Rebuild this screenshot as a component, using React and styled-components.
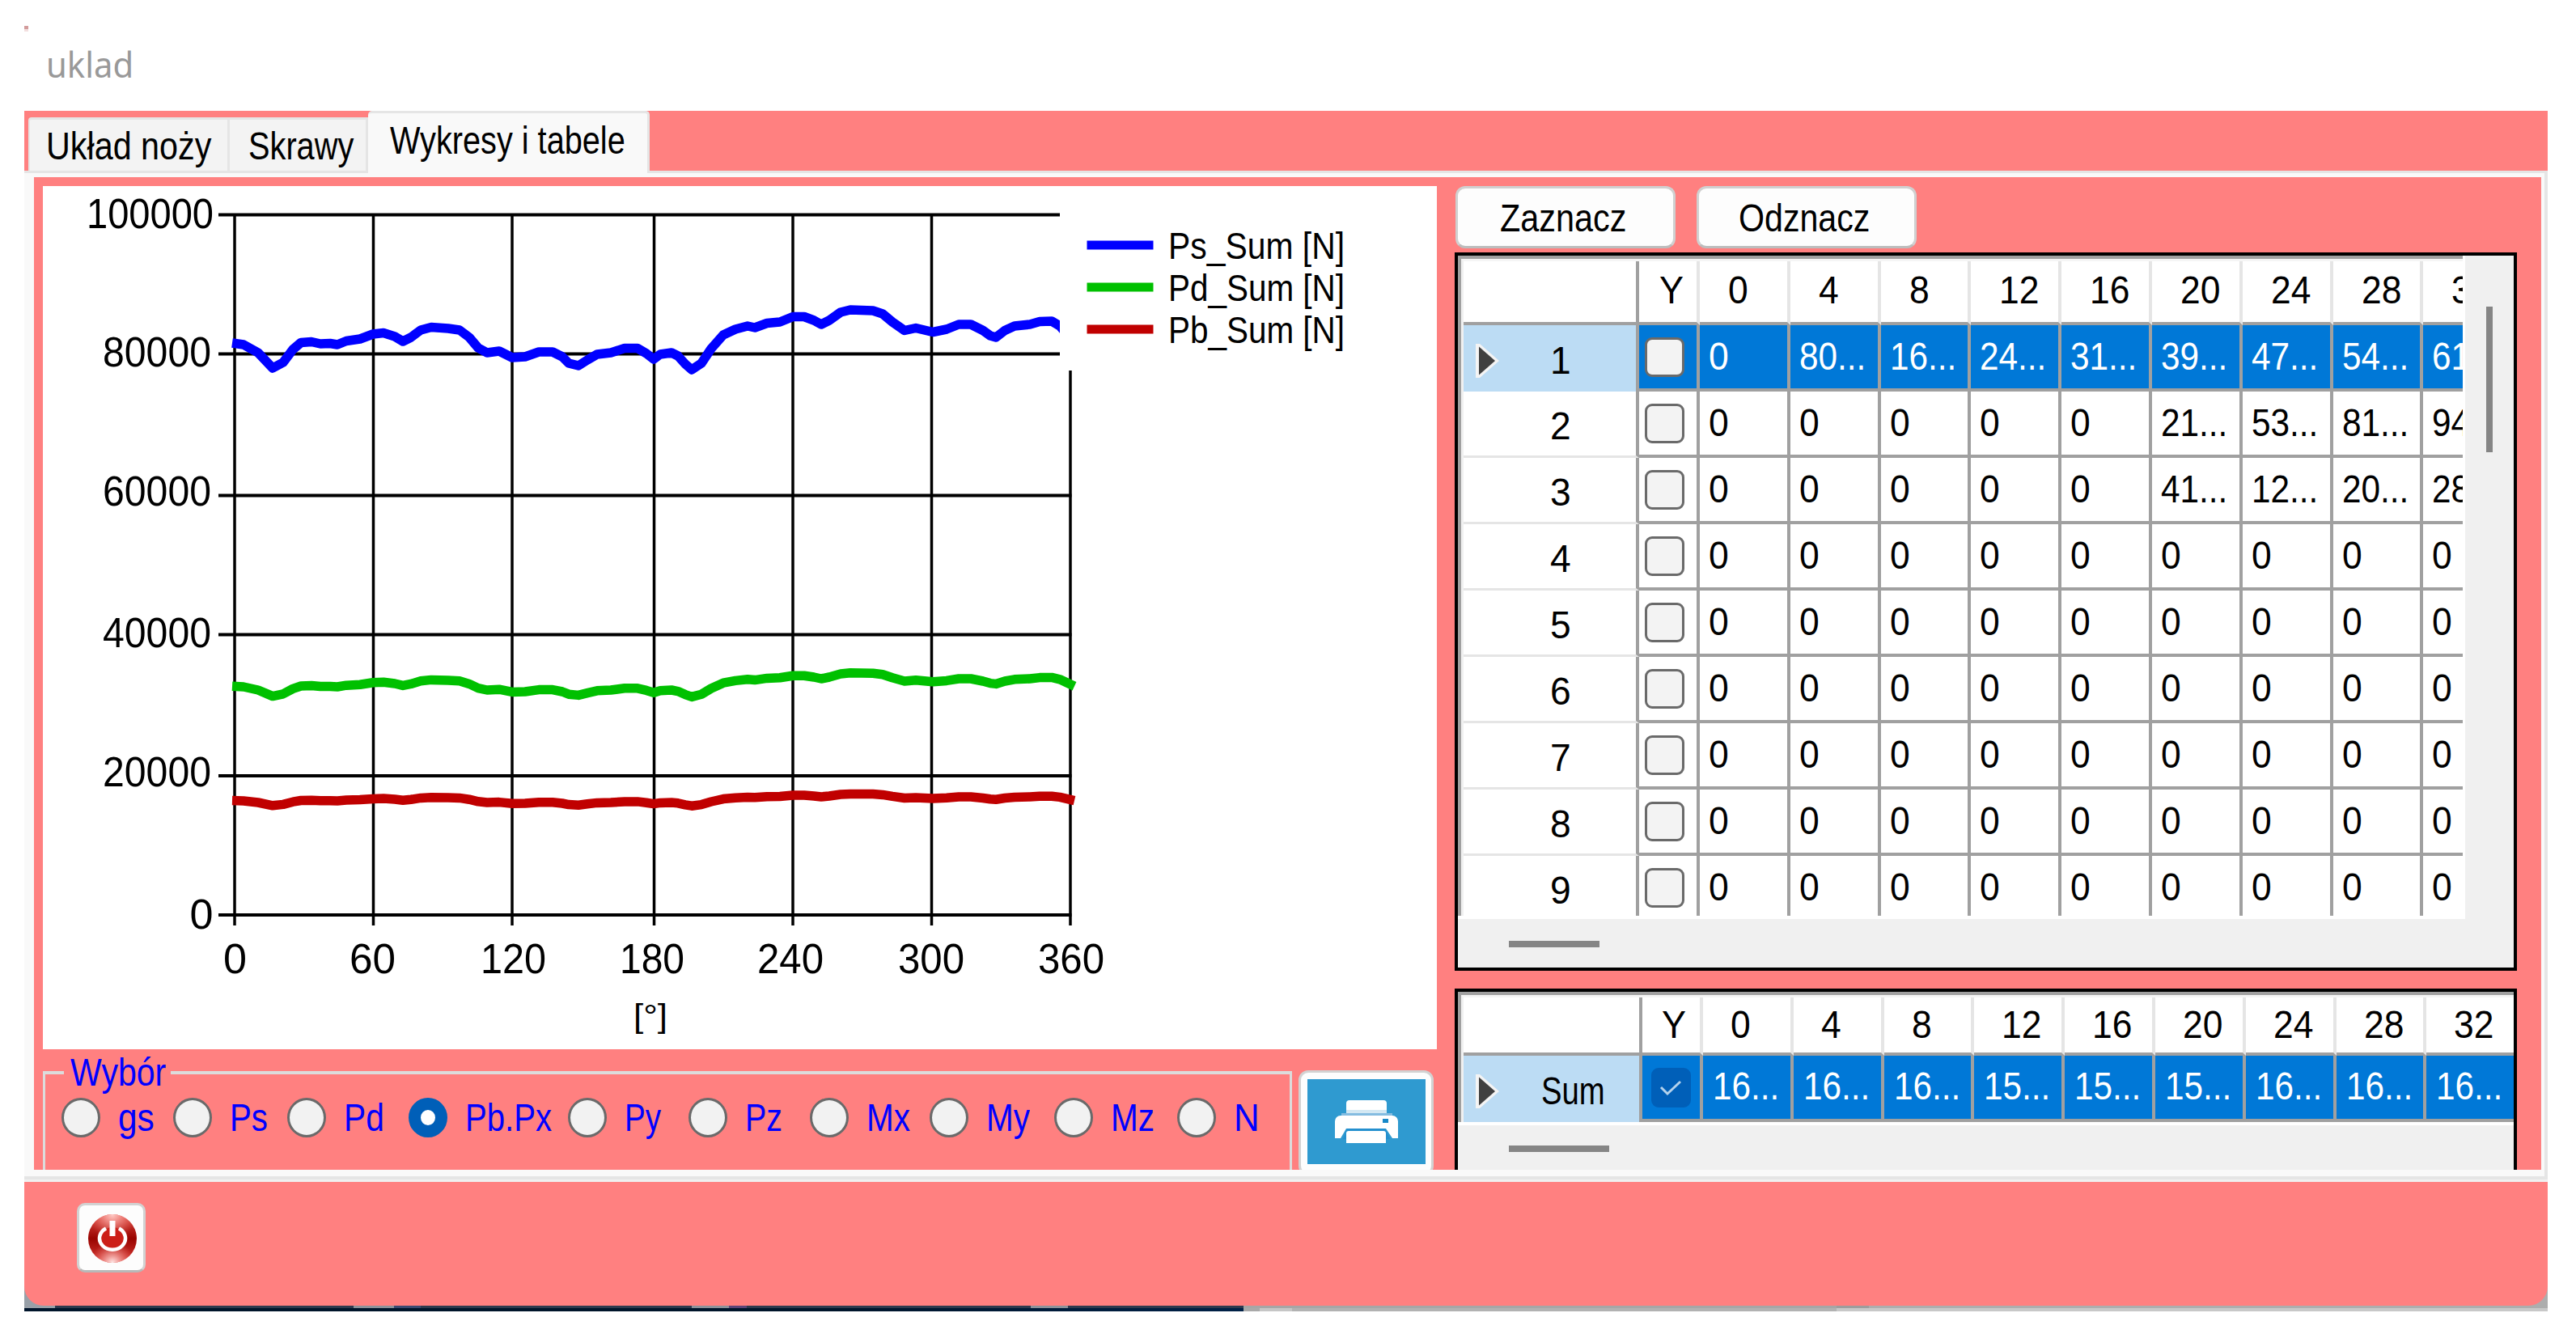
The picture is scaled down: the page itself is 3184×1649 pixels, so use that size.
import React, { useLayoutEffect, useRef, useState } from "react";
import styled, { createGlobalStyle, css } from "styled-components";

const PINK = "#ff8080";
const LINE = "#a0a0a0";
const SOFT = "#e5e5e5";
const SANS = '"Liberation Sans", Arial, sans-serif';

const Global = createGlobalStyle`
  * { box-sizing: border-box; }
  html, body { margin: 0; padding: 0; background: #fff; }
  body { width: 3184px; height: 1649px; overflow: hidden; font-family: ${SANS}; font-size: 48px; line-height: 1; color: #000; }
  button { font: inherit; color: inherit; padding: 0; margin: 0; }
`;

/* Condensed text: the glyphs are squeezed to the given advance width. */
const FitBox = styled.span`
  display: inline-block;
  flex: none;
  width: ${(p) => p.$w}px;
  white-space: nowrap;
  text-align: left;
`;
const FitInner = styled.span`
  display: inline-block;
  transform-origin: 0 50%;
  transform: scaleX(${(p) => p.$s});
`;
function Fit({ w, children }) {
  const ref = useRef(null);
  const [scale, setScale] = useState(1);
  useLayoutEffect(() => {
    if (ref.current) setScale(w / ref.current.offsetWidth);
  }, [w]);
  return (
    <FitBox $w={w}>
      <FitInner ref={ref} $s={scale}>{children}</FitInner>
    </FitBox>
  );
}

const Window = styled.div`
  width: 3119px;
  margin-left: 30px;
  display: flex;
  flex-direction: column;
`;
const TitleBar = styled.header`
  height: 137px;
  padding-top: 32px;
`;
const Speck = styled.div`
  width: 5px;
  height: 7px;
  background: linear-gradient(#d39c9c 60%, #f3dfdf 60%);
`;
const Title = styled.div`
  margin: 11px 0 0 27px;
  height: 60px;
  line-height: 60px;
  font-family: "Noto Sans", "Open Sans", sans-serif;
  font-size: 43px;
  color: #999;
`;

const TabStrip = styled.nav`
  height: 74px;
  padding-left: 5px;
  background: ${PINK};
  display: flex;
  align-items: flex-end;
`;
const Tab = styled.div`
  width: ${(p) => p.$w}px;
  height: 66px;
  padding: 3px 0 0 ${(p) => p.$pad}px;
  display: flex;
  align-items: center;
  background: #f3f3f3;
  border-top: 3px solid ${SOFT};
  border-right: 3px solid ${SOFT};
  ${(p) =>
    p.$first &&
    css`
      border-left: 2px solid ${SOFT};
      border-top-left-radius: 4px;
    `}
  ${(p) =>
    p.$active &&
    css`
      height: 77px;
      padding-top: 0;
      padding-bottom: 7px;
      margin-bottom: -3px;
      background: #f9f9f9;
      position: relative;
      border-radius: 5px 5px 0 0;
    `}
`;

const TabPage = styled.section`
  height: 1247px;
  background: #f9f9f9;
  border-top: 3px solid ${SOFT};
  border-right: 4px solid ${SOFT};
  border-bottom: 4px solid ${SOFT};
  padding: 5px 4px 8px 12px;
`;
const PageBody = styled.div`
  height: 1227px;
  background: ${PINK};
  display: flex;
  padding: 11px 0 0 11px;
  overflow: hidden;
`;
const LeftPane = styled.div`
  width: 1723px;
  display: flex;
  flex-direction: column;
`;
const ChartBox = styled.div`
  height: 1067px;
  background: #fff;
  svg { display: block; }
`;
const ChoiceRow = styled.div`
  height: 149px;
  display: flex;
  overflow: hidden;
`;
const Group = styled.fieldset`
  width: 1544px;
  height: 170px;
  margin: 5px 0 0;
  padding: 7px 0 0 20px;
  border: 3px solid #dcdcdc;
  border-top-width: 4px;
  display: block;
  color: #00f;
`;
const GroupTitle = styled.legend`
  margin-left: 3px;
  padding: 0 6px 0 8px;
  height: 48px;
`;
const Options = styled.div`
  display: flex;
`;
const Option = styled.label`
  flex: none;
  width: ${(p) => p.$w}px;
  height: 49px;
  display: flex;
  align-items: center;
  gap: 22px;
`;
const Radio = styled.span`
  flex: none;
  width: 48px;
  height: 49px;
  border-radius: 50%;
  background: ${(p) => (p.$on ? "#fff" : "#f2f2f2")};
  border: ${(p) => (p.$on ? "15px solid #005fb8" : "3px solid #6a6a6a")};
`;

const PrintButton = styled.button`
  width: 167px;
  height: 130px;
  margin: 26px 0 0 8px;
  padding: 8px 0 0;
  border: 3px solid #d2d2d2;
  border-radius: 12px;
  background: #fdfdfd;
  display: flex;
  justify-content: center;
`;
const PrintFace = styled.span`
  width: 146px;
  height: 105px;
  background: #2f9ad0;
  display: block;
  svg { display: block; }
`;

const RightPane = styled.div`
  width: 1313px;
  margin-left: 22px;
  display: flex;
  flex-direction: column;
`;
const ButtonRow = styled.div`
  height: 77px;
  display: flex;
  gap: 26px;
  padding-left: 1px;
`;
const PushButton = styled.button`
  width: 272px;
  height: 77px;
  border: 3px solid #d0d0d0;
  border-bottom-color: #bdbdbd;
  border-radius: 12px;
  background: #fdfdfd;
  display: flex;
  align-items: center;
  justify-content: center;
  padding: 2px 6px 0 0;
`;

const GridFrame = styled.div`
  height: ${(p) => p.$h}px;
  margin-top: ${(p) => p.$mt}px;
  border: 4px solid #000;
  ${(p) => p.$cut && "border-bottom: 0;"}
  background: #f0f0f0;
  display: flex;
  flex-direction: column;
`;
const GridMain = styled.div`
  display: flex;
  height: ${(p) => p.$h}px;
`;
const View = styled.div`
  flex: 1;
  min-width: 0;
  background: #fff;
  padding: 0 ${(p) => p.$pr}px 4px 0;
`;
const Rows = styled.div`
  height: 100%;
  overflow: hidden;
  border-top: 4px solid ${LINE};
  border-left: 4px solid ${LINE};
`;
const Row = styled.div`
  display: flex;
  height: ${(p) => p.$h || 82}px;
  width: max-content;
  border-left: 3px solid #f0f0f0;
  ${(p) => p.$head && "border-top: 3px solid #f5f5f5;"}
`;
const RowHead = styled.div`
  flex: none;
  width: ${(p) => p.$w}px;
  display: flex;
  align-items: center;
  padding: ${(p) => (p.$head ? 0 : "6px")} 0 0 15px;
  background: ${(p) => (p.$sel ? "#bcdcf4" : "#fff")};
  border-right: 4px solid ${LINE};
  border-bottom: ${(p) => (p.$sel ? "0" : p.$head ? `4px solid ${LINE}` : `3px solid ${SOFT}`)};
`;
const Marker = styled.span`
  flex: none;
  width: 30px;
  height: 42px;
  margin-right: ${(p) => p.$mr}px;
  svg { display: block; }
`;
const Cell = styled.div`
  flex: none;
  width: ${(p) => p.$w}px;
  display: flex;
  align-items: center;
  padding-left: ${(p) => p.$pad}px;
  padding-bottom: ${(p) => p.$pb || 0}px;
  background: ${(p) => (p.$sel ? "#0078d7" : "#fff")};
  color: ${(p) => (p.$sel ? "#fff" : "#000")};
  border-right: 4px solid ${(p) => (p.$head ? SOFT : LINE)};
  border-bottom: 4px solid ${LINE};
`;
const Check = styled.span`
  flex: none;
  width: 49px;
  height: 49px;
  border-radius: 9px;
  border: 3px solid ${(p) => (p.$on ? "#005fb8" : "#6a6a6a")};
  background: ${(p) => (p.$on ? "#005fb8" : "#f3f3f3")};
  svg { display: block; }
`;
const VScroll = styled.div`
  width: 60px;
  padding: 63px 0 0 26px;
`;
const VThumb = styled.div`
  width: 8px;
  height: 180px;
  background: #858585;
`;
const HScroll = styled.div`
  padding: ${(p) => p.$pt}px 0 0 63px;
`;
const HThumb = styled.div`
  width: ${(p) => p.$w}px;
  height: 8px;
  background: #858585;
`;

const Bottom = styled.footer`
  height: 163px;
  border-top: 3px solid #f0f0f0;
  background: linear-gradient(
    90deg,
    #98a0a8 0 38px, #2d3a4e 38px 407px, #8c929a 407px 457px, #3a4a72 457px 490px,
    #2d3a4e 490px 825px, #8c929a 825px 871px, #5a4478 871px 893px, #2d3a4e 893px 1244px,
    #8c929a 1244px 1290px, #2d3a4e 1290px 1507px, #a6a6a6 1507px 2240px, #9d9d9d 2240px 2280px, #adadad 2280px
  );
`;
const BottomBar = styled.div`
  height: 153px;
  background: ${PINK};
  border-radius: 0 0 24px 24px;
  padding: 26px 0 0 65px;
`;
const Taskline = styled.div`
  height: 4px;
  margin-top: 3px;
  background: linear-gradient(90deg, #00152b 0 1000px, #002147 1507px, #a9a9a9 1507px 1527px, #c6c6c6 1527px 1567px, #b2b2b2 1567px 2240px, #c8c8c8 2240px);
`;
const PowerButton = styled.button`
  width: 85px;
  height: 86px;
  border: 3px solid #d2d2d2;
  border-bottom-color: #b8b8b8;
  border-radius: 10px;
  background: #fdfdfd;
  display: flex;
  align-items: center;
  justify-content: center;
  padding: 2px 0 0 2px;
`;

/* ---------- chart ---------- */
const GX = [290, 461.5, 633, 808.5, 980, 1151.5, 1323];
const GY = [265.5, 437.5, 612.5, 784.5, 959, 1131];
const PS = [
  [287, 424], [301, 426], [319, 436], [337, 455], [350, 448], [362, 432], [372, 423.5], [385, 422.5], [396, 425],
  [408, 424.5], [417, 426], [428, 421.5], [445, 419], [461, 413], [474, 411.5], [488, 416], [498, 422], [508, 417],
  [520, 408], [533, 404.5], [554, 406], [568, 408], [580, 417], [591, 430], [602, 436], [617, 434], [633, 442],
  [649, 441], [666, 435], [683, 435], [695, 441], [703, 449], [715, 452], [726, 445], [738, 438], [755, 436],
  [772, 430.5], [788, 430.5], [799, 437], [808, 444], [816, 438], [830, 436], [838, 440], [847, 450], [855, 457],
  [867, 449], [879, 431], [894, 414], [909, 407], [924, 403], [933, 405], [948, 399.5], [964, 398], [980, 391.5],
  [994, 391.5], [1006, 396], [1015, 401], [1025, 396], [1039, 386], [1051, 383], [1079, 384], [1091, 388],
  [1103, 398], [1118, 408.5], [1132, 405.5], [1153, 410.5], [1170, 407], [1185, 401], [1200, 401], [1215, 408.5],
  [1224, 415], [1231, 417], [1242, 408.5], [1254, 403], [1273, 401], [1285, 397.5], [1300, 397], [1310, 403],
  [1328, 424],
];
const series = (k) => PS.map(([x, y]) => `${x},${(1131 - (1131 - y) * k).toFixed(1)}`).join(" ");
const Y_LABELS = [
  ["100000", 107, 157, 281.5], ["80000", 127, 134, 453], ["60000", 127, 134, 625],
  ["40000", 127, 134, 800], ["20000", 127, 134, 971.5], ["0", 234.5, 29, 1147.5],
];
const X_LABELS = [
  ["0", 276, 29], ["60", 432, 57], ["120", 594, 81], ["180", 766, 80],
  ["240", 936, 82], ["300", 1110, 82], ["360", 1283, 82],
];
const LEGEND = [
  ["Ps_Sum [N]", "#0000ff", 303, 319.5],
  ["Pd_Sum [N]", "#00c000", 355, 371.5],
  ["Pb_Sum [N]", "#c00000", 407, 424],
];

function Chart() {
  return (
    <svg width="1723" height="1067" viewBox="53 230 1723 1067" fontFamily={SANS} fontSize="51">
      <g stroke="#000">
        {GY.map((y) => <line key={y} x1="270" x2="1324.5" y1={y} y2={y} strokeWidth="4" />)}
        {GX.map((x) => <line key={x} x1={x} x2={x} y1="264" y2="1144" strokeWidth="3.5" />)}
      </g>
      <g fill="none" strokeWidth="11.5" strokeLinejoin="round">
        <polyline points={series(0.2)} stroke="#c00000" />
        <polyline points={series(0.4)} stroke="#00c000" />
        <polyline points={series(1)} stroke="#0000ff" />
      </g>
      <rect x="1310" y="240" width="380" height="218" fill="#fff" />
      {Y_LABELS.map(([t, x, w, y]) => (
        <text key={t} x={x} y={y} textLength={w} lengthAdjust="spacingAndGlyphs">{t}</text>
      ))}
      {X_LABELS.map(([t, x, w]) => (
        <text key={t} x={x} y="1203" textLength={w} lengthAdjust="spacingAndGlyphs">{t}</text>
      ))}
      <text x="783" y="1270" fontSize="41" textLength="42" lengthAdjust="spacingAndGlyphs">[°]</text>
      {LEGEND.map(([t, c, cy, by]) => (
        <g key={t}>
          <rect x="1343.5" y={cy - 5.5} width="82" height="11" fill={c} />
          <text x="1444" y={by} fontSize="47" textLength="218" lengthAdjust="spacingAndGlyphs">{t}</text>
        </g>
      ))}
    </svg>
  );
}

/* ---------- icons ---------- */
const PrinterIcon = () => (
  <svg width="146" height="105" viewBox="0 0 146 105">
    <path d="M52 26 h42 a4 4 0 0 1 4 4 v10 h-50 v-10 a4 4 0 0 1 4 -4z" fill="#fff" />
    <rect x="48" y="38" width="50" height="4" fill="#d3e8f3" />
    <rect x="42" y="42" width="63" height="3" fill="#84bce0" />
    <path d="M41 45 h64 a7 7 0 0 1 7 7 v21 h-7 l-8 -12 h-49 l-7 12 h-7 v-21 a7 7 0 0 1 7 -7z" fill="#fff" />
    <path d="M44 74 L49 61 H96 L102 74z" fill="#2490cf" />
    <path d="M51 64 h43 a3 3 0 0 1 3 3 v12 h-49 v-12 a3 3 0 0 1 3 -3z" fill="#fff" />
    <rect x="93" y="49" width="7" height="5" fill="#1788c8" />
  </svg>
);
const PowerIcon = () => (
  <svg width="62" height="62" viewBox="0 0 62 62">
    <defs>
      <linearGradient id="pv" x1="0" y1="0" x2="0" y2="1">
        <stop offset="0" stopColor="#e04a42" />
        <stop offset="0.5" stopColor="#990400" />
        <stop offset="1" stopColor="#d83a34" />
      </linearGradient>
      <radialGradient id="pt" cx="0.5" cy="0" r="0.5">
        <stop offset="0" stopColor="#ffd0cc" />
        <stop offset="1" stopColor="#ff8078" stopOpacity="0" />
      </radialGradient>
      <radialGradient id="pb" cx="0.5" cy="1" r="0.45">
        <stop offset="0" stopColor="#ffeceb" />
        <stop offset="1" stopColor="#ff8078" stopOpacity="0" />
      </radialGradient>
    </defs>
    <circle cx="31" cy="31" r="30" fill="url(#pv)" />
    <circle cx="31" cy="31" r="30" fill="url(#pt)" />
    <circle cx="31" cy="31" r="30" fill="url(#pb)" />
    <circle cx="31" cy="31" r="14" fill="#cc1f18" />
    <path d="M23 18.6 A 16 14 0 1 0 39 18.6" fill="none" stroke="#fff" strokeWidth="4.5" />
    <path d="M31 9 V28" stroke="#fff" strokeWidth="7" />
  </svg>
);
const Arrow = () => (
  <svg width="30" height="42" viewBox="0 0 30 42">
    <path d="M0 0 H5 L29 21 L5 42 H0z" fill="#f4f4f4" />
    <path d="M4 3.5 L24 21 L4 38.5z" fill="#404040" />
  </svg>
);

/* ---------- data ---------- */
const HEADERS = ["0", "4", "8", "12", "16", "20", "24", "28", "32"];
const Z = "0";
const DATA = [
  [Z, "80...", "16...", "24...", "31...", "39...", "47...", "54...", "61..."],
  [Z, Z, Z, Z, Z, "21...", "53...", "81...", "94..."],
  [Z, Z, Z, Z, Z, "41...", "12...", "20...", "28..."],
  ...Array.from({ length: 6 }, () => Array(9).fill(Z)),
];
const SUMS = ["16...", "16...", "16...", "15...", "15...", "15...", "16...", "16...", "16..."];
const OPTIONS = [
  ["gs", 138, 45], ["Ps", 141, 47], ["Pd", 150, 50], ["Pb.Px", 197, 107], ["Py", 149, 45], ["Pz", 150, 46],
  ["Mx", 148, 54], ["My", 154, 54], ["Mz", 152, 54], ["N", 110, 32],
];
const textWidth = (t) => (t.length === 1 ? 25 : t.length === 2 ? 49 : 82);

function HeaderRow({ headWidth, height, lift, inset }) {
  return (
    <Row $head $h={height}>
      <RowHead $w={headWidth} $head />
      <Cell $w={75} $pad={inset - 10} $pb={lift} $head><Fit w={30}>Y</Fit></Cell>
      {HEADERS.map((h) => (
        <Cell key={h} $w={111.8} $pad={inset} $pb={lift} $head><Fit w={textWidth(h)}>{h}</Fit></Cell>
      ))}
    </Row>
  );
}
function DataRow({ headWidth, label, labelWidth, markerGap, values, selected, checked, checkPad, textPad, lift }) {
  return (
    <Row>
      <RowHead $w={headWidth} $sel={selected}>
        <Marker $mr={markerGap}>{selected && <Arrow />}</Marker>
        <Fit w={labelWidth}>{label}</Fit>
      </RowHead>
      <Cell $w={75} $pad={checkPad} $sel={selected}>
        <Check $on={checked}>
          {checked && (
            <svg width="43" height="43" viewBox="0 0 43 43">
              <path d="M9 21 L17 29 L33 14" fill="none" stroke="#b4d2ec" strokeWidth="3" />
            </svg>
          )}
        </Check>
      </Cell>
      {values.map((v, i) => (
        <Cell key={i} $w={111.8} $pad={textPad} $pb={lift} $sel={selected}><Fit w={textWidth(v)}>{v}</Fit></Cell>
      ))}
    </Row>
  );
}

export default function App() {
  return (
    <>
      <Global />
      <Window>
        <TitleBar>
          <Speck />
          <Title><Fit w={108}>uklad</Fit></Title>
        </TitleBar>
        <TabStrip>
          <Tab $w={249} $pad={20} $first><Fit w={204}>Układ noży</Fit></Tab>
          <Tab $w={171} $pad={23}><Fit w={130}>Skrawy</Fit></Tab>
          <Tab $w={348} $pad={27} $active><Fit w={291}>Wykresy i tabele</Fit></Tab>
        </TabStrip>
        <TabPage>
          <PageBody>
            <LeftPane>
              <ChartBox><Chart /></ChartBox>
              <ChoiceRow>
                <Group>
                  <GroupTitle><Fit w={118}>Wybór</Fit></GroupTitle>
                  <Options>
                    {OPTIONS.map(([t, w, tw]) => (
                      <Option key={t} $w={w}>
                        <Radio $on={t === "Pb.Px"} />
                        <Fit w={tw}>{t}</Fit>
                      </Option>
                    ))}
                  </Options>
                </Group>
                <PrintButton><PrintFace><PrinterIcon /></PrintFace></PrintButton>
              </ChoiceRow>
            </LeftPane>
            <RightPane>
              <ButtonRow>
                <PushButton><Fit w={156}>Zaznacz</Fit></PushButton>
                <PushButton><Fit w={162}>Odznacz</Fit></PushButton>
              </ButtonRow>
              <GridFrame $h={888} $mt={5}>
                <GridMain $h={820}>
                  <View $pr={3}>
                    <Rows>
                      <HeaderRow headWidth={217} lift={3} inset={35} />
                      {DATA.map((values, i) => (
                        <DataRow
                          key={i}
                          headWidth={217}
                          label={String(i + 1)}
                          labelWidth={26}
                          markerGap={62}
                          values={values}
                          selected={i === 0}
                          checkPad={7}
                          textPad={11}
                        />
                      ))}
                    </Rows>
                  </View>
                  <VScroll><VThumb /></VScroll>
                </GridMain>
                <HScroll $pt={27}><HThumb $w={112} /></HScroll>
              </GridFrame>
              <GridFrame $h={224} $mt={22} $cut>
                <GridMain $h={165}>
                  <View $pr={0}>
                    <Rows>
                      <HeaderRow headWidth={221} height={75} lift={0} inset={34} />
                      <DataRow
                        headWidth={221}
                        label="Sum"
                        labelWidth={79}
                        markerGap={51}
                        values={SUMS}
                        selected
                        checked
                        checkPad={11}
                        textPad={12}
                        lift={2}
                      />
                    </Rows>
                  </View>
                </GridMain>
                <HScroll $pt={25}><HThumb $w={124} /></HScroll>
              </GridFrame>
            </RightPane>
          </PageBody>
        </TabPage>
        <Bottom>
          <BottomBar>
            <PowerButton><PowerIcon /></PowerButton>
          </BottomBar>
          <Taskline />
        </Bottom>
      </Window>
    </>
  );
}
